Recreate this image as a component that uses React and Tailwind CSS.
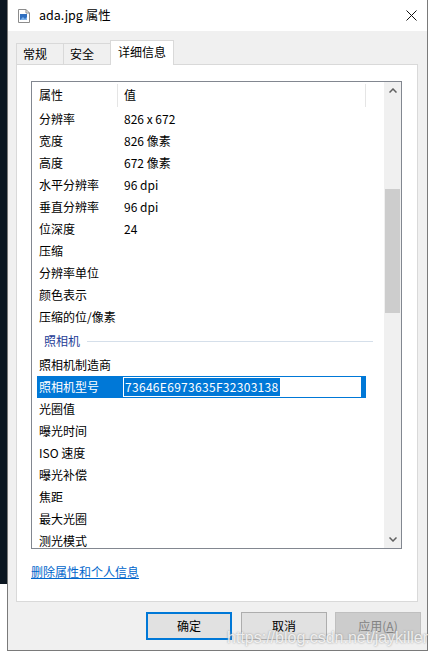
const font = { fontFamily: '"Microsoft YaHei UI", "Noto Sans CJK SC", "Noto Sans", sans-serif' }

const imageRows = [
  ['分辨率', '826 x 672'],
  ['宽度', '826 像素'],
  ['高度', '672 像素'],
  ['水平分辨率', '96 dpi'],
  ['垂直分辨率', '96 dpi'],
  ['位深度', '24'],
  ['压缩', ''],
  ['分辨率单位', ''],
  ['颜色表示', ''],
  ['压缩的位/像素', ''],
]

const cameraRows = [
  ['照相机制造商', ''],
  ['照相机型号', '73646E6973635F32303138', true],
  ['光圈值', ''],
  ['曝光时间', ''],
  ['ISO 速度', ''],
  ['曝光补偿', ''],
  ['焦距', ''],
  ['最大光圈', ''],
  ['测光模式', ''],
]

function FileIcon() {
  return (
    <svg width="12" height="14" viewBox="0 0 12 14">
      <path d="M0.5 0.5h7.5l3.5 3.5v9.5h-11z" fill="#fff" stroke="#8c8c8c" />
      <path d="M8 0.5v3.5h3.5" fill="none" stroke="#8c8c8c" />
      <rect x="2" y="5" width="7" height="6" fill="#2f6fc0" />
      <path d="M2 11l3-3 2 2 2-2v3z" fill="#7fb2e8" />
    </svg>
  )
}

function Row({ name, value, selected }) {
  if (selected) {
    return (
      <div className="h-[22px] w-[329px] flex items-center bg-[#0078d7] pl-[2px] text-white">
        <div className="w-[84px] shrink-0 truncate">{name}</div>
        <div className="w-[238px] h-[20px] bg-white border border-white flex items-center">
          <span className="bg-[#0078d7] text-white pl-[1px] pr-[1px] leading-[18px] tracking-[0.3px]">{value}</span>
        </div>
      </div>
    )
  }
  return (
    <div className="h-[22px] w-[329px] flex items-center pl-[2px] text-black">
      <div className="w-[85px] shrink-0 whitespace-nowrap">{name}</div>
      <div className="whitespace-nowrap">{value}</div>
    </div>
  )
}

function Scrollbar() {
  return (
    <div className="w-[17px] bg-[#f0f0f0] flex flex-col">
      <div className="h-[17px] flex items-center justify-center">
        <svg width="8" height="5" viewBox="0 0 8 5">
          <path d="M0.5 4.5L4 1l3.5 3.5" fill="none" stroke="#606060" strokeWidth="1.5" />
        </svg>
      </div>
      <div className="flex-1 flex flex-col">
        <div className="h-[90px]" />
        <div className="h-[124px] bg-[#cdcdcd] mx-[1px]" />
      </div>
      <div className="h-[17px] flex items-center justify-center">
        <svg width="8" height="5" viewBox="0 0 8 5">
          <path d="M0.5 0.5L4 4l3.5-3.5" fill="none" stroke="#606060" strokeWidth="1.5" />
        </svg>
      </div>
    </div>
  )
}

function PropertyList() {
  return (
    <div className="ml-[14px] w-[371px] h-[468px] border border-[#828790] bg-white flex overflow-hidden">
      <div className="flex-1 flex flex-col overflow-hidden">
        <div className="h-[26px] shrink-0 flex items-center relative">
          <div className="w-[85px] pl-[7px]">属性</div>
          <div className="w-px h-[23px] bg-[#e5e5e5]" />
          <div className="pl-[6px]">值</div>
          <div className="absolute left-[333px] top-[2px] w-px h-[23px] bg-[#e5e5e5]" />
        </div>
        <div className="pl-[5px] flex flex-col">
          {imageRows.map(([n, v]) => (
            <Row key={n} name={n} value={v} />
          ))}
          <div className="h-[26px] flex items-center pl-[7px] pr-[11px]">
            <span className="text-[#1e3c96] whitespace-nowrap">照相机</span>
            <div className="flex-1 h-px bg-[#d5dfea] ml-[7px]" />
          </div>
          {cameraRows.map(([n, v, s]) => (
            <Row key={n} name={n} value={v} selected={s} />
          ))}
        </div>
      </div>
      <Scrollbar />
    </div>
  )
}

export default function App() {
  return (
    <div className="w-[435px] h-[658px] bg-white flex items-start overflow-hidden relative text-[12px]" style={font}>
      <div className="w-[7px] h-[584px] bg-[#0b1621]" />
      <div className="w-[421px] h-[651px] border-x border-b border-[#7a7a7a] bg-[#f0f0f0] flex flex-col">
        <div className="h-[31px] bg-white flex items-center shrink-0">
          <div className="ml-[10px] mr-[9px] flex items-center">
            <FileIcon />
          </div>
          <span className="text-[12.5px] text-black">ada.jpg 属性</span>
          <div className="ml-auto mr-[10px]">
            <svg width="11" height="11" viewBox="0 0 11 11">
              <path d="M0.5 0.5l10 10M10.5 0.5l-10 10" stroke="#111" strokeWidth="1" />
            </svg>
          </div>
        </div>
        <div className="pt-[9px] pl-[8px]">
          <div className="flex items-end h-[24px] relative z-10">
            <div className="w-[48px] h-[21px] border border-b-0 border-[#d9d9d9] bg-[#f0f0f0] flex items-center pl-[6px]">常规</div>
            <div className="w-[48px] h-[21px] -ml-px border border-b-0 border-[#d9d9d9] bg-[#f0f0f0] flex items-center pl-[6px]">安全</div>
            <div className="w-[64px] h-[25px] -ml-px -mb-px border border-b-0 border-[#d9d9d9] bg-white flex items-center pl-[7px] pb-[2px]">详细信息</div>
          </div>
          <div className="w-[402px] h-[538px] border border-[#d9d9d9] bg-white pt-[16px]">
            <PropertyList />
            <div className="ml-[14px] mt-[14px] leading-[18px]">
              <span className="text-[#0066cc] underline">删除属性和个人信息</span>
            </div>
          </div>
        </div>
        <div className="flex justify-end mt-[10px] pr-[6px]">
          <button className="w-[86px] h-[28px] border-2 border-[#0078d7] bg-[#e1e1e1] text-black">确定</button>
          <button className="w-[86px] h-[28px] ml-[9px] border border-[#adadad] bg-[#e1e1e1] text-black">取消</button>
          <button className="w-[86px] h-[28px] ml-[8px] border border-[#bfbfbf] bg-[#cccccc] text-[#838383]">
            应用(<span className="underline">A</span>)
          </button>
        </div>
      </div>
      <div
        className="absolute left-[227px] top-[626px] text-[16px] text-white/80 [text-shadow:0_0_2px_#8a8a8a] whitespace-nowrap"
        style={{ fontFamily: '"Liberation Sans", Arial, sans-serif' }}
      >
        https://blog.csdn.net/jaykiller
      </div>
    </div>
  )
}
